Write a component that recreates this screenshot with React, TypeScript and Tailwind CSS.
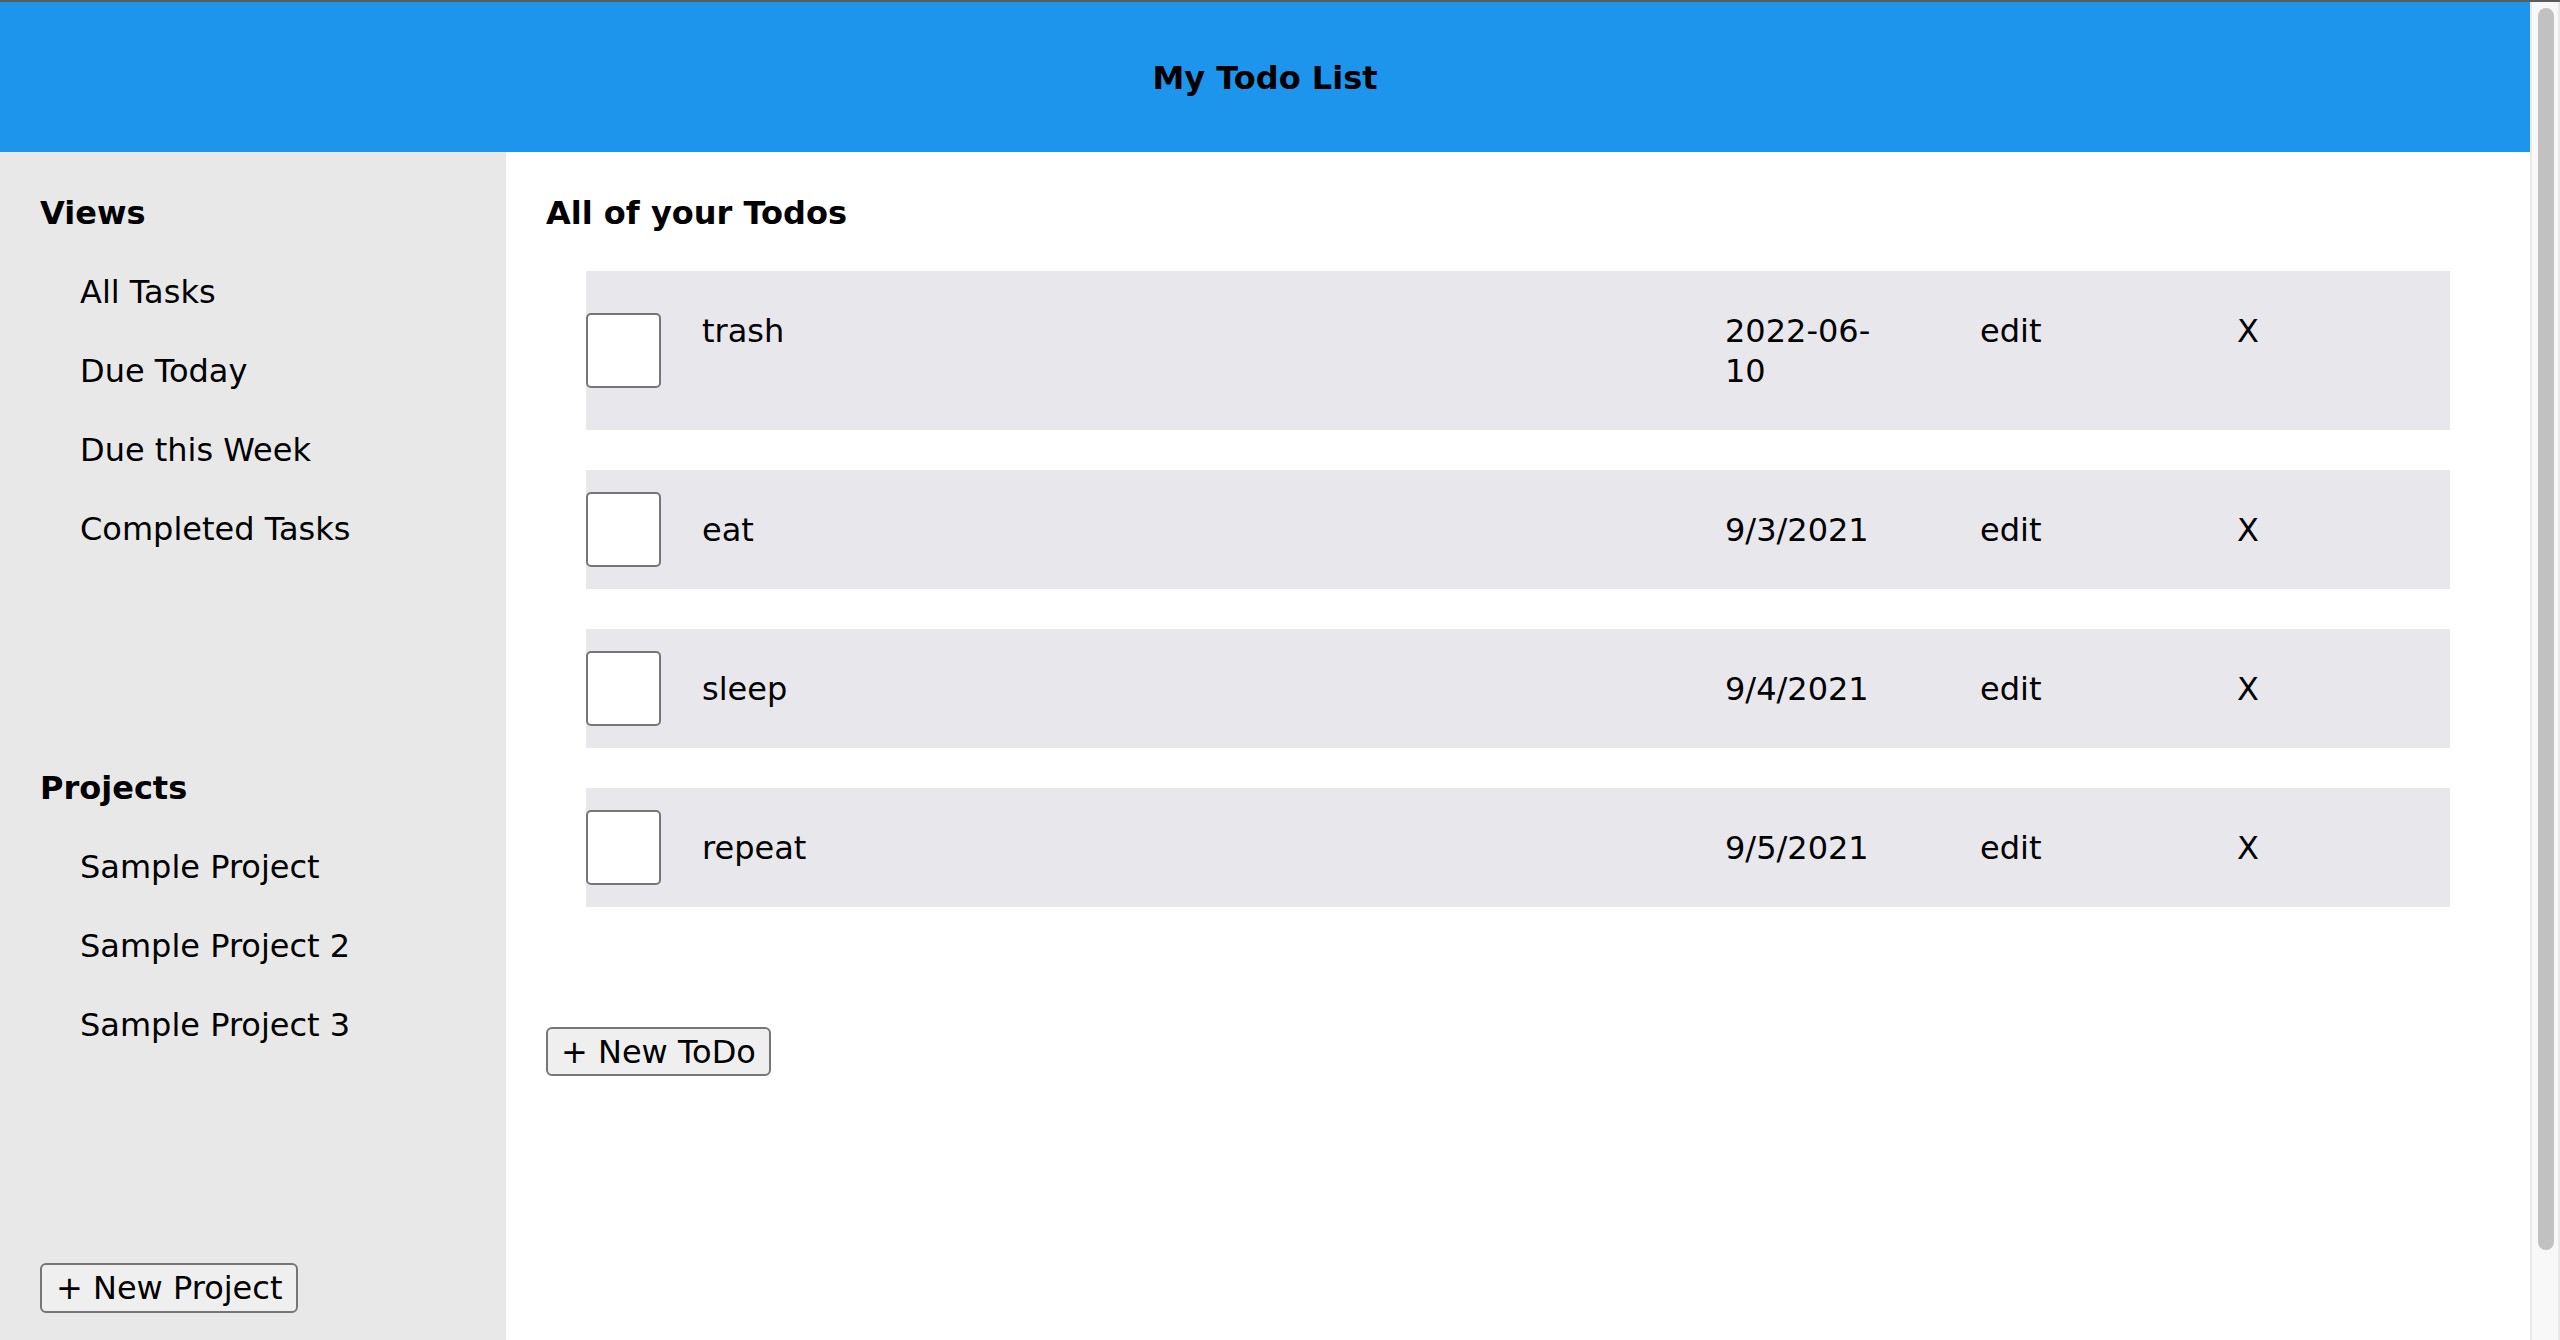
import { useState } from 'react';

interface Todo {
  id: number;
  title: string;
  due: string;
  done: boolean;
}

const views = ['All Tasks', 'Due Today', 'Due this Week', 'Completed Tasks'];
const projects = ['Sample Project', 'Sample Project 2', 'Sample Project 3'];

const initialTodos: Todo[] = [
  { id: 1, title: 'trash', due: '2022-06-10', done: false },
  { id: 2, title: 'eat', due: '9/3/2021', done: false },
  { id: 3, title: 'sleep', due: '9/4/2021', done: false },
  { id: 4, title: 'repeat', due: '9/5/2021', done: false },
];

// let long iso dates wrap after the hyphens
const breakable = (s: string) => s.replace(/-/g, '-\u200B');

function Sidebar() {
  return (
    <aside className="w-[506px] shrink-0 bg-[#e8e8e8] flex flex-col pt-[41px] px-10">
      <h3 className="font-bold leading-10">Views</h3>
      <ul className="flex flex-col gap-[39px] mt-[39px] pl-10">
        {views.map((v) => (
          <li key={v} className="leading-10 cursor-pointer">
            {v}
          </li>
        ))}
      </ul>

      <h3 className="font-bold leading-10 mt-[219px]">Projects</h3>
      <ul className="flex flex-col gap-[39px] mt-[39px] pl-10">
        {projects.map((p) => (
          <li key={p} className="leading-10 cursor-pointer">
            {p}
          </li>
        ))}
      </ul>

      <button className="mt-auto mb-[27px] self-start h-[50px] px-[14px] border-2 border-[#767676] rounded-[6px] bg-[#efefef] leading-none">
        + New Project
      </button>
    </aside>
  );
}

function TodoRow({ todo, onToggle, onDelete }: { todo: Todo; onToggle: () => void; onDelete: () => void }) {
  return (
    <div className="grid grid-cols-[116px_1023px_255px_257px_1fr] items-start py-[19px] bg-[#e8e7ec]">
      <input
        type="checkbox"
        checked={todo.done}
        onChange={onToggle}
        className="appearance-none self-center w-[75px] h-[75px] border-2 border-[#767676] rounded-[5px] bg-white"
      />
      <span className="leading-10 pt-[21px] pb-5">{todo.title}</span>
      <span className="leading-10 pt-[21px] pb-5 w-[175px]">{breakable(todo.due)}</span>
      <span className="leading-10 pt-[21px] pb-5 cursor-pointer">edit</span>
      <span className="leading-10 pt-[21px] pb-5 cursor-pointer" onClick={onDelete}>
        X
      </span>
    </div>
  );
}

export default function App() {
  const [todos, setTodos] = useState<Todo[]>(initialTodos);

  return (
    <div className="h-[1340px] flex flex-col text-[32px] text-black font-['DejaVu_Sans',sans-serif] overflow-hidden">
      <div className="h-[2px] bg-[#5b5b5b] shrink-0" />
      <div className="flex flex-1 min-h-0">
        <div className="flex-1 flex flex-col min-w-0">
          <header className="h-[150px] shrink-0 bg-[#1e95ed] flex items-center justify-center pt-[2px]">
            <h1 className="font-bold">My Todo List</h1>
          </header>

          <div className="flex flex-1 min-h-0">
            <Sidebar />

            <main className="flex-1 bg-white pt-[41px] px-10">
              <h2 className="font-bold leading-10">All of your Todos</h2>
              <div className="flex flex-col gap-10 mt-[38px] mx-10">
                {todos.map((t) => (
                  <TodoRow
                    key={t.id}
                    todo={t}
                    onToggle={() => setTodos(todos.map((x) => (x.id === t.id ? { ...x, done: !x.done } : x)))}
                    onDelete={() => setTodos(todos.filter((x) => x.id !== t.id))}
                  />
                ))}
              </div>
              <button className="mt-[120px] h-[49px] px-[13px] border-2 border-[#767676] rounded-[6px] bg-[#efefef] leading-none">
                + New ToDo
              </button>
            </main>
          </div>
        </div>

        {/* fake scrollbar */}
        <div className="w-[30px] shrink-0 bg-[#f8f8f8] border-l-2 border-r-2 border-[#e8e8e8]">
          <div className="mt-[6px] ml-[6px] w-[16px] h-[1242px] rounded-full bg-[#c1c1c1]" />
        </div>
      </div>
    </div>
  );
}
